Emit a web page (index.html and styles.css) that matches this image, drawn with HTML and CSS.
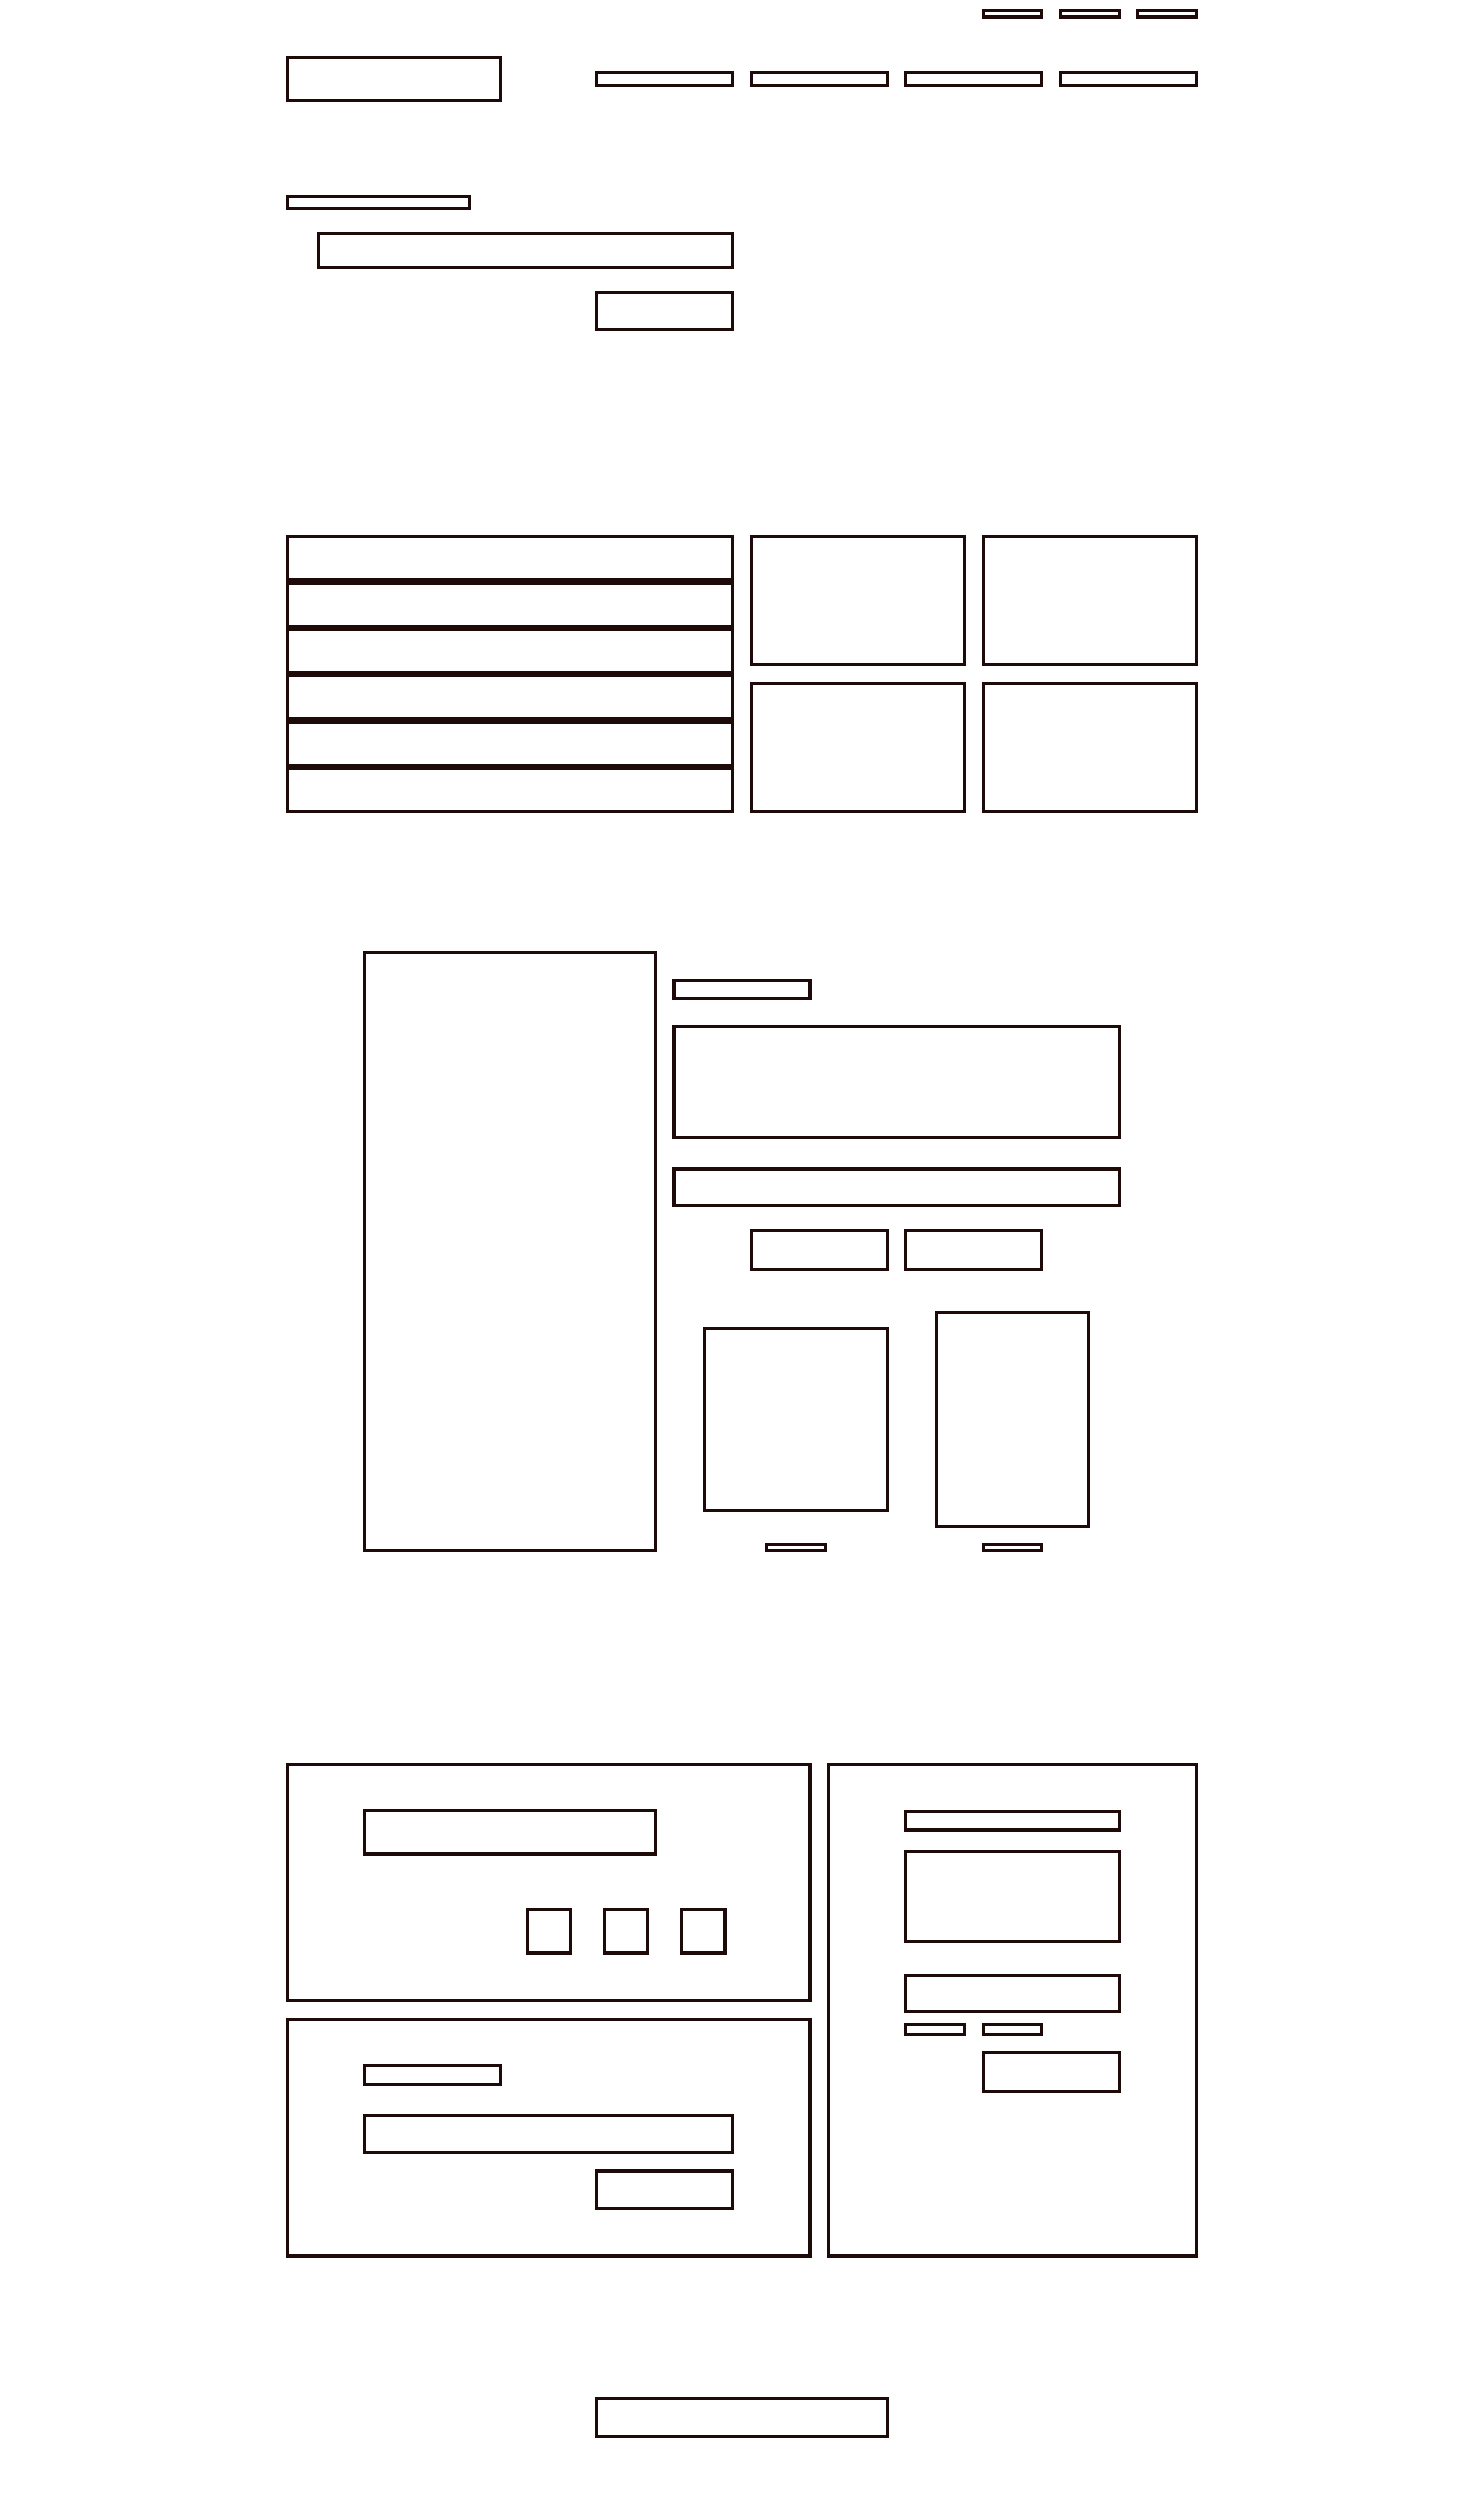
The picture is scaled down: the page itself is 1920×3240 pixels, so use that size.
FILE: index.html
```html
<!DOCTYPE html>
<html lang="en">
<head>
<meta charset="utf-8">
<title>Wireframe</title>
<link rel="stylesheet" href="styles.css">
</head>
<body>
<div class="page">
  <header class="site-header">
    <nav class="utility">
      <span class="box utility-link"></span>
      <span class="box utility-link"></span>
      <span class="box utility-link"></span>
    </nav>
    <div class="masthead">
      <div class="box logo"></div>
      <nav class="main-nav">
        <span class="box nav-item"></span>
        <span class="box nav-item"></span>
        <span class="box nav-item"></span>
        <span class="box nav-item"></span>
      </nav>
    </div>
  </header>

  <section class="hero">
    <div class="box hero-kicker"></div>
    <div class="box hero-title"></div>
    <div class="box hero-button"></div>
  </section>

  <section class="showcase">
    <ul class="list">
      <li class="box list-row"></li>
      <li class="box list-row"></li>
      <li class="box list-row"></li>
      <li class="box list-row"></li>
      <li class="box list-row"></li>
      <li class="box list-row"></li>
    </ul>
    <div class="box card"></div>
    <div class="box card"></div>
    <div class="box card"></div>
    <div class="box card"></div>
  </section>

  <section class="feature">
    <aside class="box sidebar"></aside>
    <div class="feature-body">
      <div class="box feature-label"></div>
      <div class="box feature-text"></div>
      <div class="box feature-input"></div>
      <div class="feature-actions">
        <span class="box action-btn"></span>
        <span class="box action-btn"></span>
      </div>
      <div class="figures">
        <div class="box figure-img figure-a"></div>
        <div class="box figure-img figure-b"></div>
        <div class="box caption"></div>
        <div class="box caption"></div>
      </div>
    </div>
  </section>

  <section class="panels">
    <div class="box panel panel-a">
      <div class="box pa-input"></div>
      <div class="pa-squares">
        <span class="box square"></span>
        <span class="box square"></span>
        <span class="box square"></span>
      </div>
    </div>
    <div class="box panel panel-b">
      <div class="box pb-label"></div>
      <div class="box pb-input"></div>
      <div class="box pb-button"></div>
    </div>
    <div class="box panel panel-c">
      <div class="box pc-label"></div>
      <div class="box pc-text"></div>
      <div class="box pc-input"></div>
      <div class="pc-links">
        <span class="box pc-link"></span>
        <span class="box pc-link"></span>
      </div>
      <div class="box pc-button"></div>
    </div>
  </section>

  <footer class="site-footer">
    <div class="box footer-box"></div>
  </footer>
</div>
</body>
</html>
```

FILE: styles.css
```css
* {
  box-sizing: border-box;
}

html, body {
  margin: 0;
  padding: 0;
  background: #ffffff;
  font-family: "Liberation Sans", Arial, sans-serif;
}

.box {
  display: block;
  border: 4px solid #1e0a09;
  background: #ffffff;
}

.page {
  width: 1180px;
  margin: 0 auto;
}

/* Header */
.utility {
  display: flex;
  justify-content: flex-end;
  gap: 20px;
  padding-top: 12px;
}

.utility-link {
  width: 80px;
  height: 12px;
}

.masthead {
  margin-top: 48px;
  display: flex;
  justify-content: space-between;
  align-items: center;
}

.logo {
  width: 280px;
  height: 60px;
}

.main-nav {
  display: flex;
  gap: 20px;
}

.nav-item {
  width: 180px;
  height: 21px;
}

/* Hero */
.hero {
  margin-top: 120px;
  width: 580px;
  display: flex;
  flex-direction: column;
  align-items: flex-start;
}

.hero-kicker {
  width: 240px;
  height: 20px;
}

.hero-title {
  align-self: flex-end;
  width: 540px;
  height: 48px;
  margin-top: 28px;
}

.hero-button {
  align-self: flex-end;
  width: 180px;
  height: 52px;
  margin-top: 28px;
}

/* Showcase grid */
.showcase {
  margin-top: 264px;
  display: grid;
  grid-template-columns: 580px 280px 280px;
  grid-template-rows: 170px 170px;
  gap: 20px;
}

.list {
  grid-row: 1 / span 2;
  margin: 0;
  padding: 0;
  list-style: none;
  display: flex;
  flex-direction: column;
}

.list-row {
  height: 60px;
}

.card {
  height: 170px;
}

/* Feature */
.feature {
  margin: 178px auto 0;
  width: 980px;
  display: grid;
  grid-template-columns: 380px 580px;
  gap: 20px;
  align-items: start;
}

.sidebar {
  height: 777px;
}

.feature-body {
  padding-top: 36px;
  display: flex;
  flex-direction: column;
}

.feature-label {
  width: 180px;
  height: 27px;
}

.feature-text {
  height: 147px;
  margin-top: 33px;
}

.feature-input {
  height: 51px;
  margin-top: 37px;
}

.feature-actions {
  margin-top: 29px;
  display: flex;
  justify-content: center;
  gap: 20px;
}

.action-btn {
  width: 180px;
  height: 54px;
}

.figures {
  margin-top: 52px;
  display: grid;
  grid-template-columns: 240px 200px;
  column-gap: 60px;
  row-gap: 20px;
  justify-content: center;
  align-items: center;
  justify-items: center;
}

.figure-a {
  width: 240px;
  height: 240px;
}

.figure-b {
  width: 200px;
  height: 280px;
}

.caption {
  width: 80px;
  height: 12px;
}

/* Panels */
.panels {
  margin-top: 272px;
  display: grid;
  grid-template-columns: 680px 480px;
  grid-template-rows: 310px 310px;
  gap: 20px;
}

.panel {
  padding: 0 96px;
}

.panel-a {
  padding-top: 56px;
}

.pa-input {
  width: 380px;
  height: 60px;
}

.pa-squares {
  margin-top: 68px;
  display: flex;
  justify-content: flex-end;
  gap: 40px;
  padding-right: 10px;
}

.square {
  width: 60px;
  height: 60px;
}

.panel-b {
  padding-top: 56px;
  display: flex;
  flex-direction: column;
}

.pb-label {
  width: 180px;
  height: 28px;
}

.pb-input {
  height: 52px;
  margin-top: 36px;
}

.pb-button {
  align-self: flex-end;
  width: 180px;
  height: 53px;
  margin-top: 20px;
}

.panel-c {
  grid-column: 2;
  grid-row: 1 / span 2;
  padding-top: 57px;
  display: flex;
  flex-direction: column;
}

.pc-label {
  height: 28px;
}

.pc-text {
  height: 120px;
  margin-top: 24px;
}

.pc-input {
  height: 51px;
  margin-top: 40px;
}

.pc-links {
  margin-top: 13px;
  display: flex;
  gap: 20px;
}

.pc-link {
  width: 80px;
  height: 16px;
}

.pc-button {
  align-self: flex-end;
  width: 180px;
  height: 54px;
  margin-top: 20px;
}

/* Footer */
.site-footer {
  margin-top: 180px;
  display: flex;
  justify-content: center;
}

.footer-box {
  width: 380px;
  height: 53px;
}
```
